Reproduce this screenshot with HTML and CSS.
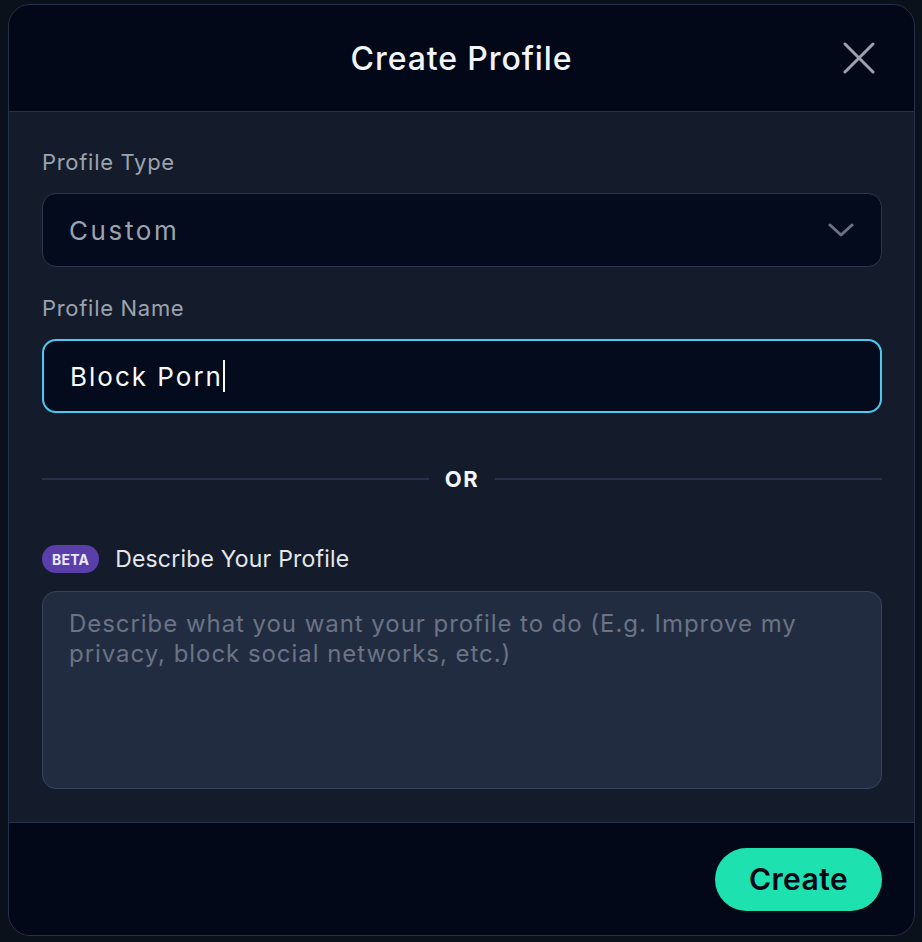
FILE: index.html
```html
<!DOCTYPE html>
<html lang="en">
<head>
<meta charset="utf-8">
<title>Create Profile</title>
<link rel="stylesheet" href="styles.css">
</head>
<body>
<div class="modal">
  <header class="modal-header">
    <span class="spacer"></span>
    <h1 class="title">Create Profile</h1>
    <button class="close" aria-label="Close">
      <svg width="32" height="32" viewBox="0 0 32 32" fill="none" stroke="currentColor" stroke-width="3" stroke-linecap="round">
        <path d="M2 2 L30 30 M30 2 L2 30"/>
      </svg>
    </button>
  </header>
  <main class="modal-body">
    <label class="label">Profile Type</label>
    <div class="field select">
      <span class="value muted">Custom</span>
      <svg class="chevron" width="26" height="16" viewBox="0 0 26 16" fill="none" stroke="currentColor" stroke-width="3" stroke-linecap="round" stroke-linejoin="round">
        <path d="M2 3 L13 13 L24 3"/>
      </svg>
    </div>
    <label class="label second">Profile Name</label>
    <div class="field focused">
      <span class="value">Block Porn</span><span class="caret"></span>
    </div>
    <div class="divider">
      <span class="line"></span>
      <span class="or">OR</span>
      <span class="line"></span>
    </div>
    <div class="describe-row">
      <span class="badge">BETA</span>
      <span class="describe-label">Describe Your Profile</span>
    </div>
    <div class="textarea">
      <span class="placeholder">Describe what you want your profile to do (E.g. Improve my privacy, block social networks, etc.)</span>
    </div>
  </main>
  <footer class="modal-footer">
    <button class="create">Create</button>
  </footer>
</div>
</body>
</html>
```
FILE: styles.css
```css
* { box-sizing: border-box; }
html, body { margin: 0; padding: 0; }
body {
  width: 922px;
  height: 942px;
  background: #0b111b;
  font-family: "Inter", "Noto Sans", sans-serif;
  padding: 4px 7px 6px 8px;
}
.modal {
  height: 932px;
  border: 1.5px solid #26324a;
  border-radius: 22px;
  overflow: hidden;
  display: flex;
  flex-direction: column;
  background: #141c2b;
}
.modal-header {
  height: 107px;
  flex: none;
  background: #020817;
  border-bottom: 1.5px solid #26324a;
  display: grid;
  grid-template-columns: 1fr auto 1fr;
  align-items: center;
  padding: 0 39px;
}
.title {
  margin: 0;
  font-size: 32px;
  font-weight: 500;
  color: #f1f5f9;
  letter-spacing: 0.9px;
}
.close {
  justify-self: end;
  background: none;
  border: 0;
  padding: 0;
  color: #9ca3af;
  display: flex;
}
.modal-body {
  flex: 1;
  padding: 36px 32px 0 33px;
  display: flex;
  flex-direction: column;
}
.label {
  font-size: 22px;
  line-height: 28px;
  color: #9ca3af;
  margin-bottom: 17px;
  letter-spacing: 0.7px;
}
.label.second { margin-top: 27px; }
.field {
  height: 74px;
  border: 1.5px solid #2b3750;
  border-radius: 14px;
  background: #040b1d;
  display: flex;
  align-items: center;
  padding: 0 26px;
}
.field.focused {
  border: 2px solid #4cc9f0;
}
.select { justify-content: space-between; }
.value {
  font-size: 26px;
  color: #f8fafc;
  letter-spacing: 2px;
}
.value.muted { color: #9ca3af; letter-spacing: 2.6px; }
.chevron { color: #6b7280; margin-right: 1px; }
.caret {
  width: 2px;
  height: 32px;
  background: #f8fafc;
  margin-left: 0;
}
.divider {
  margin-top: 52px;
  height: 28px;
  display: flex;
  align-items: center;
  gap: 16px;
}
.line {
  flex: 1;
  height: 2px;
  background: #27324a;
}
.or {
  font-size: 22px;
  font-weight: 700;
  color: #f1f5f9;
  letter-spacing: 1.5px;
}
.describe-row {
  margin-top: 52px;
  height: 28px;
  display: flex;
  align-items: center;
  gap: 16px;
}
.badge {
  background: #5a3fab;
  color: #ede9fe;
  font-size: 14px;
  font-weight: 700;
  height: 28px;
  padding: 0 10px;
  border-radius: 14px;
  display: flex;
  align-items: center;
  letter-spacing: 0.2px;
}
.describe-label {
  font-size: 23px;
  color: #e5e7eb;
  letter-spacing: 0.2px;
}
.textarea {
  margin-top: 18px;
  height: 198px;
  background: #222c41;
  border: 1.5px solid #36435e;
  border-radius: 14px;
  padding: 17px 26px;
}
.placeholder {
  font-size: 24px;
  line-height: 30px;
  color: #6b7384;
  letter-spacing: 0.95px;
  display: block;
}
.modal-footer {
  height: 113px;
  flex: none;
  background: #020817;
  border-top: 1.5px solid #26324a;
  display: flex;
  align-items: center;
  justify-content: flex-end;
  padding: 0 32px;
}
.create {
  width: 167px;
  height: 63px;
  border: 0;
  border-radius: 32px;
  background: #1de2b0;
  color: #020617;
  font-family: "Inter", "Noto Sans", sans-serif;
  font-size: 30px;
  font-weight: 600;
  letter-spacing: 0.4px;
}
```
